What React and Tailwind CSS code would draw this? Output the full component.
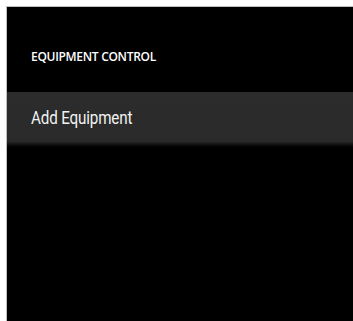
export default function App() {
  return (
    <div className="w-[353px] h-[321px] bg-white pl-[6px] pt-[6px] overflow-hidden">
      <div className="h-full bg-black border-l border-t border-[#bdbdbd] flex flex-col">
        <div className="h-[85px] flex items-center pl-[24px] pt-[14px]">
          <span className="text-white text-[12px] font-semibold tracking-[-0.3px] font-['Open_Sans',sans-serif]">
            EQUIPMENT CONTROL
          </span>
        </div>
        <div className="h-[58px] bg-gradient-to-b from-[#2c2c2c] via-[#2a2a2a] via-[85%] to-[#000] flex items-start pl-[24px] pt-[12px]">
          <span className="inline-block origin-left scale-x-[0.8] text-[#f2f2f2] text-[19px] tracking-[-0.2px] font-['Roboto',sans-serif]">
            Add Equipment
          </span>
        </div>
        <div className="flex-1 bg-black" />
      </div>
    </div>
  )
}
